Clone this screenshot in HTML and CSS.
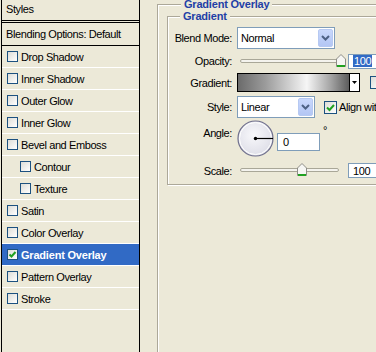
FILE: index.html
```html
<!DOCTYPE html>
<html lang="en">
<head>
    <meta charset="UTF-8">
    <meta name="viewport" content="width=device-width, initial-scale=1.0">
    <title>Layer Style - Gradient Overlay</title>
    <link rel="stylesheet" href="styles.css">
</head>
<body>
    <div class="dialog">
        <div class="styles-panel">
            <div class="panel-head">Styles</div>
            <div class="blending">Blending Options: Default</div>
            <ul class="style-list">
                <li class="style-item"><span class="check"></span>Drop Shadow</li>
                <li class="style-item"><span class="check"></span>Inner Shadow</li>
                <li class="style-item"><span class="check"></span>Outer Glow</li>
                <li class="style-item"><span class="check"></span>Inner Glow</li>
                <li class="style-item"><span class="check"></span>Bevel and Emboss</li>
                <li class="style-item sub"><span class="check"></span>Contour</li>
                <li class="style-item sub"><span class="check"></span>Texture</li>
                <li class="style-item"><span class="check"></span>Satin</li>
                <li class="style-item"><span class="check"></span>Color Overlay</li>
                <li class="style-item active">
                    <span class="check">
                        <svg width="9" height="9" viewBox="0 0 9 9"><polyline points="1.5,4.5 3.5,6.5 7.5,2" fill="none" stroke="#21a121" stroke-width="2"/></svg>
                    </span>Gradient Overlay
                </li>
                <li class="style-item"><span class="check"></span>Pattern Overlay</li>
                <li class="style-item"><span class="check"></span>Stroke</li>
            </ul>
        </div>

        <div class="options">
            <div class="group outer-group">
                <div class="group-title">Gradient Overlay</div>
                <div class="group inner-group">
                    <div class="group-title">Gradient</div>
                    <div class="form">
                        <div class="form-row row-blend">
                            <label>Blend Mode:</label>
                            <div class="select select-blend">
                                <span class="select-value">Normal</span>
                                <span class="drop-btn">
                                    <svg width="9" height="6" viewBox="0 0 9 6"><polyline points="1,1 4.5,4.5 8,1" fill="none" stroke="#4d6185" stroke-width="2"/></svg>
                                </span>
                            </div>
                        </div>

                        <div class="form-row row-opacity">
                            <label>Opacity:</label>
                            <div class="control">
                                <svg class="slider" width="111" height="16" viewBox="0 0 111 16">
                                    <rect x="3.5" y="6.5" width="98" height="3" rx="1.5" fill="#f4f3ee" stroke="#a9a798"/>
                                    <path d="M99.5 6 L104 1.5 L108.5 6 V13.5 H99.5 Z" fill="#f6f6f3" stroke="#8e8d87"/>
                                    <path d="M100 13 H108" stroke="#21a121" stroke-width="2"/>
                                </svg>
                                <span class="num-input"><span class="selection">100</span></span>
                            </div>
                        </div>

                        <div class="form-row row-gradient">
                            <label>Gradient:</label>
                            <div class="control">
                                <div class="gradient-picker">
                                    <span class="gradient-swatch"></span>
                                    <span class="gradient-arrow">
                                        <svg width="5" height="3" viewBox="0 0 5 3"><polygon points="0,0 5,0 2.5,3" fill="#000"/></svg>
                                    </span>
                                </div>
                                <span class="check big reverse"></span>
                            </div>
                        </div>

                        <div class="form-row row-style">
                            <label>Style:</label>
                            <div class="control">
                                <div class="select select-style">
                                    <span class="select-value">Linear</span>
                                    <span class="drop-btn">
                                        <svg width="9" height="6" viewBox="0 0 9 6"><polyline points="1,1 4.5,4.5 8,1" fill="none" stroke="#4d6185" stroke-width="2"/></svg>
                                    </span>
                                </div>
                                <span class="check big align-check">
                                    <svg width="11" height="11" viewBox="0 0 11 11"><polyline points="2,5.5 4.5,8 9,3" fill="none" stroke="#21a121" stroke-width="2"/></svg>
                                </span>
                                <span class="check-label">Align with Layer</span>
                            </div>
                        </div>

                        <div class="form-row row-angle">
                            <label>Angle:</label>
                            <div class="control">
                                <svg class="dial" width="37" height="37" viewBox="0 0 37 37">
                                    <defs>
                                        <radialGradient id="dialFill" cx="45%" cy="40%" r="65%">
                                            <stop offset="0" stop-color="#f8f8fb"/>
                                            <stop offset="1" stop-color="#dcdce6"/>
                                        </radialGradient>
                                    </defs>
                                    <circle cx="18.5" cy="18.5" r="17.5" fill="url(#dialFill)" stroke="#6f6f8c" stroke-width="1.2"/>
                                    <circle cx="18.5" cy="18.5" r="16" fill="none" stroke="#ffffff" stroke-width="1"/>
                                    <line x1="18.5" y1="18.5" x2="36" y2="18.5" stroke="#000" stroke-width="1.2"/>
                                    <circle cx="18.5" cy="18.5" r="1.7" fill="#000"/>
                                </svg>
                                <span class="num-input angle-input">0</span>
                                <span class="degree">°</span>
                            </div>
                        </div>

                        <div class="form-row row-scale">
                            <label>Scale:</label>
                            <div class="control">
                                <svg class="slider" width="111" height="15" viewBox="0 0 111 15">
                                    <rect x="3.5" y="5.5" width="98" height="3" rx="1.5" fill="#f4f3ee" stroke="#a9a798"/>
                                    <path d="M60.5 5 L65 0.5 L69.5 5 V12.5 H60.5 Z" fill="#f6f6f3" stroke="#8e8d87"/>
                                    <path d="M61 12 H69" stroke="#21a121" stroke-width="2"/>
                                </svg>
                                <span class="num-input">100</span>
                            </div>
                        </div>
                    </div>
                </div>
            </div>
        </div>
    </div>
</body>
</html>
```

FILE: styles.css
```css
* {
    box-sizing: border-box;
}

body {
    margin: 0;
    width: 376px;
    height: 352px;
    overflow: hidden;
    background-color: #ece9d8;
    font-family: "Liberation Sans", Tahoma, Arial, sans-serif;
    font-size: 11px;
    letter-spacing: -0.4px;
    color: #000;
}

.dialog {
    display: flex;
    height: 352px;
}

/* 왼쪽 스타일 목록 */
.styles-panel {
    flex: none;
    width: 139px;
    margin-left: 1px;
    border-left: 1px solid #000;
    border-right: 1px solid #000;
}

.panel-head {
    height: 23px;
    line-height: 19px;
    padding-left: 4px;
    border-bottom: 3px double #000;
}

.blending {
    height: 23px;
    line-height: 22px;
    padding-left: 4px;
    border-bottom: 1px solid #000;
}

.style-list {
    list-style: none;
    margin: 0;
    padding: 0;
}

.style-item {
    display: flex;
    align-items: center;
    gap: 3px;
    height: 22px;
    padding-left: 5px;
    border-bottom: 1px solid #fff;
}

.style-item.sub {
    padding-left: 18px;
}

.style-item.active {
    background-color: #316ac5;
    color: #fff;
    font-weight: bold;
    letter-spacing: -0.2px;
}

.check {
    flex: none;
    display: flex;
    align-items: center;
    justify-content: center;
    width: 11px;
    height: 11px;
    border: 1px solid #1c5180;
    background: linear-gradient(135deg, #dcdcd7, #fff);
}

.check.big {
    width: 13px;
    height: 13px;
}

/* 오른쪽 옵션 영역 */
.options {
    flex: 1;
    min-width: 0;
    padding-left: 17px;
}

.group {
    border: 1px solid #aca899;
    box-shadow: inset 1px 1px 0 #fff, 1px 1px 0 #fff;
}

.group-title {
    width: fit-content;
    margin: -5px 0 0 14px;
    padding: 0 3px;
    background-color: #ece9d8;
    color: #1f3fa6;
    font-weight: bold;
    line-height: 9px;
    letter-spacing: -0.2px;
}

.outer-group {
    margin-top: 4px;
    margin-right: -40px;
    height: 400px;
    padding-left: 9px;
}

.inner-group {
    margin-top: 7px;
    padding-bottom: 6px;
}

.inner-group .group-title {
    margin-left: 12px;
}

.form {
    display: flex;
    flex-direction: column;
    gap: 4px;
    margin-top: 6px;
}

.form-row {
    display: grid;
    grid-template-columns: 64px auto;
    column-gap: 5px;
    align-items: center;
}

.form-row label {
    text-align: right;
}

.control {
    display: flex;
    align-items: center;
}

.row-blend { height: 22px; }
.row-opacity { height: 16px; }
.row-gradient { height: 19px; }
.row-style { height: 22px; }
.row-angle { height: 37px; margin-top: -2px; align-items: start; }
.row-scale { height: 15px; margin-top: 2px; }

.row-angle label {
    padding-top: 7px;
}

.row-angle .control {
    align-items: flex-start;
}

/* 드롭다운 */
.select {
    display: flex;
    align-items: center;
    height: 22px;
    padding-left: 3px;
    border: 1px solid #7f9db9;
    background-color: #fff;
}

.select-blend { width: 98px; }
.select-style { width: 78px; }

.drop-btn {
    display: flex;
    align-items: center;
    justify-content: center;
    width: 15px;
    height: 18px;
    margin-left: auto;
    margin-right: 1px;
    border: 1px solid #b6c9f2;
    border-radius: 2px;
    background: linear-gradient(#c9d8fc, #b3c6f4);
}

/* 숫자 입력 */
.num-input {
    flex: none;
    display: flex;
    align-items: center;
    width: 40px;
    height: 15px;
    padding-left: 4px;
    border: 1px solid #7f9db9;
    background-color: #fff;
}

.selection {
    background-color: #316ac5;
    color: #fff;
    padding: 0 1px;
}

.gradient-picker {
    display: flex;
    width: 123px;
    height: 19px;
    border: 1px solid #000;
}

.gradient-swatch {
    flex: 1;
    background: linear-gradient(to right, #6b6b6b 0%, #9c9c9c 25%, #f6f6f6 62%, #a2a2a2 84%, #5c5c5c 100%);
}

.gradient-arrow {
    display: flex;
    align-items: center;
    justify-content: center;
    width: 10px;
    border-left: 1px solid #000;
    background-color: #fff;
}

.reverse {
    margin-left: 10px;
}

.align-check {
    margin-left: 9px;
}

.check-label {
    margin-left: 2px;
    white-space: nowrap;
}

.angle-input {
    width: 43px;
    height: 18px;
    margin: 13px 0 0 3px;
    padding-left: 5px;
}

.degree {
    margin: 4px 0 0 3px;
}
```
